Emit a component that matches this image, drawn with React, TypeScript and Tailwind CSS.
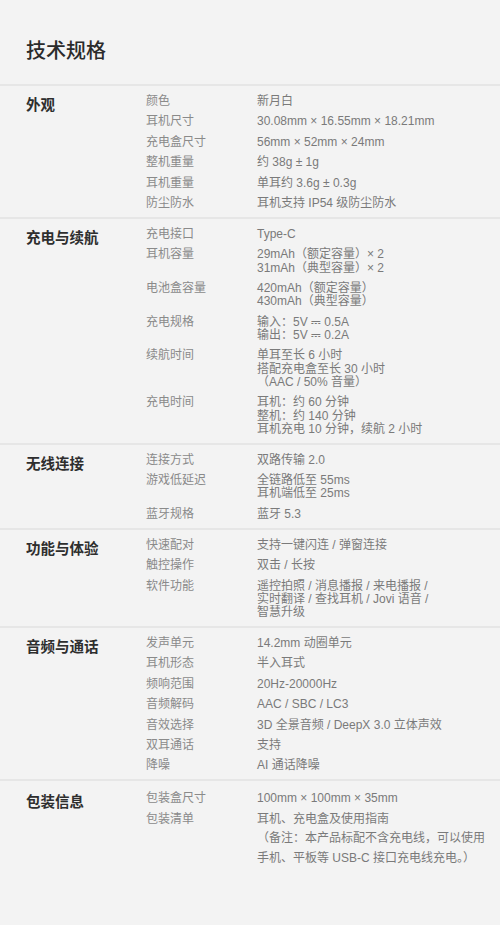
import React from 'react';

type Row = { label: string; lines: string[]; loose?: boolean };
type Section = { title: string; rows: Row[] };

const sections: Section[] = [
  {
    title: '外观',
    rows: [
      { label: '颜色', lines: ['新月白'] },
      { label: '耳机尺寸', lines: ['30.08mm × 16.55mm × 18.21mm'] },
      { label: '充电盒尺寸', lines: ['56mm × 52mm × 24mm'] },
      { label: '整机重量', lines: ['约 38g ± 1g'] },
      { label: '耳机重量', lines: ['单耳约 3.6g ± 0.3g'] },
      { label: '防尘防水', lines: ['耳机支持 IP54 级防尘防水'] },
    ],
  },
  {
    title: '充电与续航',
    rows: [
      { label: '充电接口', lines: ['Type-C'] },
      { label: '耳机容量', lines: ['29mAh（额定容量）× 2', '31mAh（典型容量）× 2'] },
      { label: '电池盒容量', lines: ['420mAh（额定容量）', '430mAh（典型容量）'] },
      { label: '充电规格', lines: ['输入：5V ⎓ 0.5A', '输出：5V ⎓ 0.2A'] },
      { label: '续航时间', lines: ['单耳至长 6 小时', '搭配充电盒至长 30 小时', '（AAC / 50% 音量）'] },
      { label: '充电时间', lines: ['耳机：约 60 分钟', '整机：约 140 分钟', '耳机充电 10 分钟，续航 2 小时'] },
    ],
  },
  {
    title: '无线连接',
    rows: [
      { label: '连接方式', lines: ['双路传输 2.0'] },
      { label: '游戏低延迟', lines: ['全链路低至 55ms', '耳机端低至 25ms'] },
      { label: '蓝牙规格', lines: ['蓝牙 5.3'] },
    ],
  },
  {
    title: '功能与体验',
    rows: [
      { label: '快速配对', lines: ['支持一键闪连 / 弹窗连接'] },
      { label: '触控操作', lines: ['双击 / 长按'] },
      { label: '软件功能', lines: ['遥控拍照 / 消息播报 / 来电播报 /', '实时翻译 / 查找耳机 / Jovi 语音 /', '智慧升级'] },
    ],
  },
  {
    title: '音频与通话',
    rows: [
      { label: '发声单元', lines: ['14.2mm 动圈单元'] },
      { label: '耳机形态', lines: ['半入耳式'] },
      { label: '频响范围', lines: ['20Hz-20000Hz'] },
      { label: '音频解码', lines: ['AAC / SBC / LC3'] },
      { label: '音效选择', lines: ['3D 全景音频 / DeepX 3.0 立体声效'] },
      { label: '双耳通话', lines: ['支持'] },
      { label: '降噪', lines: ['AI 通话降噪'] },
    ],
  },
  {
    title: '包装信息',
    rows: [
      { label: '包装盒尺寸', lines: ['100mm × 100mm × 35mm'] },
      {
        label: '包装清单',
        loose: true,
        lines: ['耳机、充电盒及使用指南', '（备注：本产品标配不含充电线，可以使用', '手机、平板等 USB-C 接口充电线充电。）'],
      },
    ],
  },
];

export default function App() {
  return (
    <div
      className="w-[500px] h-[925px] bg-[#f3f3f3] overflow-hidden"
      style={{ fontFamily: '"Liberation Sans", "Noto Sans CJK SC", sans-serif' }}
    >
      {/* 标题 */}
      <h1 className="pl-[26px] pt-[39px] h-[84px] text-[20px] leading-[24px] font-medium text-[#2b2b2b]">技术规格</h1>

      {sections.map((s, i) => (
        <div
          key={s.title}
          className={`flex border-t-2 border-[#e6e6e6] pb-[6.6px] ${i === sections.length - 1 ? 'pt-[11px]' : 'pt-[9px]'}`}
        >
          <div className="w-[146px] pl-[26px] pt-[1px] text-[14.5px] leading-[18px] font-bold text-[#2e2e2e] shrink-0">
            {s.title}
          </div>
          <div className="flex flex-col gap-[7.1px]">
            {s.rows.map((r) => (
              <div key={r.label} className="flex text-[12px] leading-[13.3px]">
                <div className="w-[111px] h-[13.3px] text-[#8a8a8a] shrink-0">{r.label}</div>
                <div className={`flex flex-col text-[#7a7a7a] ${r.loose ? 'gap-[6.5px]' : ''}`}>
                  {r.lines.map((l) => (
                    <span key={l} className="block h-[13.3px] whitespace-nowrap">{l}</span>
                  ))}
                </div>
              </div>
            ))}
          </div>
        </div>
      ))}
    </div>
  );
}
